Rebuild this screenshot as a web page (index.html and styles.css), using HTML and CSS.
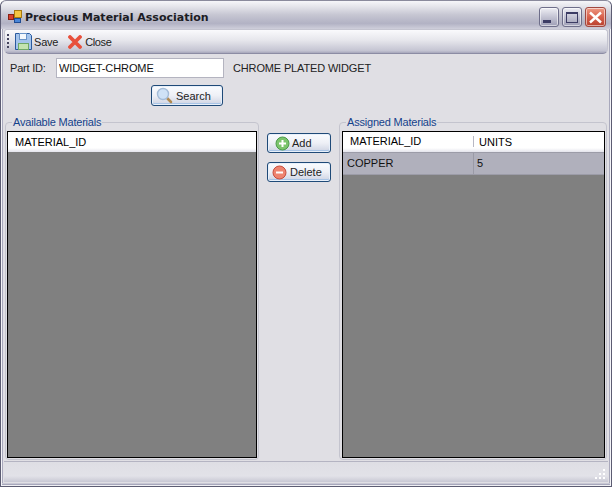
FILE: index.html
```html
<!DOCTYPE html>
<html lang="en">
<head>
<meta charset="utf-8">
<title>Precious Material Association</title>
<link rel="stylesheet" href="styles.css">
</head>
<body>
<div class="window">
  <header class="titlebar">
    <svg class="app-icon" width="16" height="16" viewBox="0 0 16 16">
      <rect x="7.5" y="1.5" width="7" height="7" fill="#f5c542" stroke="#a87a10"/>
      <rect x="1.5" y="5.5" width="5" height="5" fill="#d8402c" stroke="#8a2014"/>
      <rect x="7.5" y="9.5" width="6" height="4" fill="#4a86d8" stroke="#1e4c94"/>
    </svg>
    <span class="title">Precious Material Association</span>
    <div class="caption-buttons">
      <span class="cap"><i class="min-glyph"></i></span>
      <span class="cap"><i class="max-glyph"></i></span>
      <span class="cap cap-close">
        <svg width="15" height="13" viewBox="0 0 15 13"><path d="M2 1.5 13 11.5M13 1.5 2 11.5" stroke="#fff" stroke-width="2.4"/></svg>
      </span>
    </div>
  </header>
  <nav class="toolbar">
    <span class="grip"></span>
    <span class="tool tool-save">
      <svg width="17" height="17" viewBox="0 0 17 17">
        <path d="M.5 .5h14l2 2v14H.5z" fill="#a4c4ec" stroke="#2b5a9e"/>
        <rect x="4.5" y=".5" width="7" height="6" fill="#f4f8fc" stroke="#6a94c8"/>
        <rect x="3.5" y="10.5" width="10" height="6" fill="#c4e4b0" stroke="#6fa868"/>
      </svg>
      Save
    </span>
    <span class="tool tool-close">
      <svg width="14" height="14" viewBox="0 0 14 14"><path d="M2 2 12 12M12 2 2 12" stroke="#e8503c" stroke-width="3.8" stroke-linecap="round"/></svg>
      Close
    </span>
  </nav>
  <main class="content">
    <div class="part-row">
      <label class="part-label" for="part">Part ID:</label>
      <input class="part-input" id="part" value="WIDGET-CHROME">
      <span class="part-desc">CHROME PLATED WIDGET</span>
    </div>
    <div class="search-row">
      <button class="btn btn-search">
        <svg width="17" height="17" viewBox="0 0 17 17">
          <path d="M10 10 15 15" stroke="#b08a50" stroke-width="2.6" stroke-linecap="round"/>
          <circle cx="7" cy="7" r="5.5" fill="#cfe2f6" stroke="#a4bcd8" stroke-width="1.4"/>
        </svg>
        Search
      </button>
    </div>
    <div class="materials">
      <fieldset class="group group-left">
        <legend>Available Materials</legend>
        <div class="grid">
          <div class="grid-head"><span class="col col-wide">MATERIAL_ID</span></div>
        </div>
      </fieldset>
      <div class="actions">
        <button class="btn btn-action btn-add">
          <svg width="15" height="15" viewBox="0 0 15 15">
            <circle cx="7.5" cy="7.5" r="6.5" fill="#7cc46c" stroke="#4a9a48"/>
            <path d="M7.5 4v7M4 7.5h7" stroke="#fff" stroke-width="2"/>
          </svg>
          Add
        </button>
        <button class="btn btn-action btn-delete">
          <svg width="15" height="15" viewBox="0 0 15 15">
            <circle cx="7.5" cy="7.5" r="6.5" fill="#ee8470" stroke="#c84c3c"/>
            <path d="M4 7.5h7" stroke="#fff" stroke-width="2"/>
          </svg>
          Delete
        </button>
      </div>
      <fieldset class="group group-right">
        <legend>Assigned Materials</legend>
        <div class="grid">
          <div class="grid-head">
            <span class="col col-id">MATERIAL_ID</span>
            <span class="col col-units">UNITS</span>
          </div>
          <div class="grid-row">
            <span class="cell col-id">COPPER</span>
            <span class="cell col-units">5</span>
          </div>
        </div>
      </fieldset>
    </div>
  </main>
  <footer class="statusbar">
    <svg class="resize" width="12" height="12" viewBox="0 0 12 12" fill="#fff">
      <path d="M9 1h2v2H9zM5 5h2v2H5zM9 5h2v2H9zM1 9h2v2H1zM5 9h2v2H5zM9 9h2v2H9z"/>
    </svg>
  </footer>
</div>
</body>
</html>
```
FILE: styles.css
```css
* { box-sizing: border-box; }
html, body { margin: 0; height: 100%; overflow: hidden; }
body { font-family: "Liberation Sans", Arial, sans-serif; font-size: 11px; color: #000; }

.window {
  height: 487px;
  display: flex;
  flex-direction: column;
  background: #e0dfe4;
  border: 1px solid #5c5c72;
  border-top-color: #8a8a9c;
  padding: 0 3px 4px;
  box-shadow: inset 1px 0 0 #f4f4f8, inset -1px 0 0 #f4f4f8, inset 0 -1px 0 #f0f0f4, inset 0 -2px 0 #a8a8bc, inset 0 -3px 0 #c8c8d4, inset 2px 0 0 #a8a8bc, inset -2px 0 0 #a8a8bc;
  border-radius: 6px 6px 0 0;
}

.titlebar {
  flex: 0 0 28px;
  margin: 0 -3px;
  padding: 4px 5px 0 6px;
  display: flex;
  align-items: center;
  gap: 2px;
  border-radius: 6px 6px 0 0;
  background: linear-gradient(#f6f6f9 0, #e6e6ec 18%, #c6c6d2 50%, #b2b2c4 80%, #cfcfdb 100%);
}
.app-icon { flex: none; }
.title { font-family: "DejaVu Sans", sans-serif; font-size: 11px; font-weight: bold; color: #1c1c24; }
.caption-buttons { margin-left: auto; display: flex; gap: 3px; }
.cap {
  width: 20px; height: 20px;
  border: 1px solid #6e6e8a;
  border-radius: 3px;
  background: linear-gradient(#eeeef4, #c0c0d0 55%, #9e9eb6);
  box-shadow: inset 0 0 0 1px rgba(255,255,255,.55);
  position: relative;
  display: flex; align-items: center; justify-content: center;
}
.cap-close { width: 21px; border-color: #a04840; background: linear-gradient(#ee9a84, #d8604c 50%, #b8402e); }
.min-glyph { width: 8px; height: 3px; background: #3c3c64; position: relative; top: 4px; left: -2px; }
.max-glyph { width: 12px; height: 11px; border: 1px solid #3c3c64; border-top-width: 2px; }

.toolbar {
  flex: 0 0 25px;
  display: flex;
  align-items: center;
  padding: 0 0 0 2px;
  border: 1px solid #c4c4d0;
  border-bottom-color: #8c8ca4;
  border-radius: 3px 3px 5px 5px;
  background: linear-gradient(#fafafc, #e6e6ec 45%, #c4c4d2 90%, #a6a6ba);
}
.grip {
  width: 2px; height: 16px;
  background: repeating-linear-gradient(#44445e 0 2px, transparent 2px 4px);
  margin-right: 6px;
}
.tool { display: flex; align-items: center; color: #222; letter-spacing: -.2px; }
.tool-save { gap: 2px; margin-right: 10px; }
.tool-close { gap: 3px; letter-spacing: -.4px; }

.content { flex: 1; display: flex; flex-direction: column; min-height: 0; }

.part-row { display: flex; align-items: center; height: 20px; margin-top: 4px; padding-left: 6px; color: #222; }
.part-label { width: 46px; letter-spacing: -.2px; }
.part-input {
  width: 168px; height: 20px;
  border: 1px solid #b4b4c0;
  background: #fff;
  padding: 0 2px;
  font: inherit;
  letter-spacing: -.1px;
  color: #111;
  outline: none;
}
.part-desc { margin-left: 9px; letter-spacing: -.15px; }

.search-row { padding-left: 147px; margin-top: 7px; height: 21px; display: flex; }

.btn {
  display: flex;
  align-items: center;
  font: inherit;
  color: #222;
  padding: 0;
  border: 1px solid #1f4a78;
  border-radius: 3px;
  background: linear-gradient(#fafcff, #eef0f6 50%, #ccd2e2);
  box-shadow: inset 0 0 0 1px #e8f0fa, inset 0 -1px 0 1px #a8c4e6;
}
.btn-search { width: 72px; height: 21px; padding-left: 4px; gap: 3px; }
.btn-action { width: 64px; height: 20px; }
.btn-add { padding-left: 7px; gap: 2px; }
.btn-delete { padding-left: 4px; gap: 3px; }

.materials { flex: 1; display: flex; min-height: 0; margin-top: 10px; padding: 0 0 0 1px; }

.group {
  margin: 0 0 1px;
  padding: 0 1px 1px;
  min-width: 0;
  border: 1px solid #c4c4ce;
  border-radius: 4px;
  display: flex;
  flex-direction: column;
  position: relative;
}
.group legend { color: #15428b; padding: 0 1px; margin-left: 5px; line-height: 13px; height: 13px; letter-spacing: -.2px; }
.group-left { width: 254px; }
.group-right { width: 268px; padding-left: 2px; }
.group-right legend { margin-left: 4px; }

.grid {
  flex: 1;
  margin-top: 2px;
  background: #808080;
  border: 1px solid #000;
  min-height: 0;
}
.grid-head {
  height: 20px;
  padding-bottom: 1px;
  display: flex;
  align-items: center;
  background: linear-gradient(#fff 0, #fff 80%, #e4e4ec);
}
.col { padding-left: 7px; }
.col-wide { flex: 1; }
.col-id { width: 131px; }
.col-units { flex: 1; }
.grid-head .col-id { border-right: 1px solid #b8b8c4; height: 11px; line-height: 11px; }
.grid-head .col-units { padding-left: 5px; }
.grid-row {
  height: 23px;
  display: flex;
  background: #b0b0bc;
  border-top: 1px solid #9c9ca8;
  border-bottom: 1px solid #9c9ca8;
}
.cell { padding-left: 4px; line-height: 21px; color: #111; }
.cell.col-units { padding-left: 3px; }
.cell.col-id { border-right: 1px solid #9a9aa6; }

.actions {
  width: 80px;
  flex: none;
  display: flex;
  flex-direction: column;
  gap: 9px;
  align-items: center;
  padding-top: 17px;
}

.statusbar {
  flex: 0 0 21px;
  position: relative;
  border-top: 1px solid #b4b4c2;
  background: linear-gradient(#dedee4, #e2e2e8 70%, #c8c8d4);
}
.resize { position: absolute; right: 2px; bottom: 2px; }
```
